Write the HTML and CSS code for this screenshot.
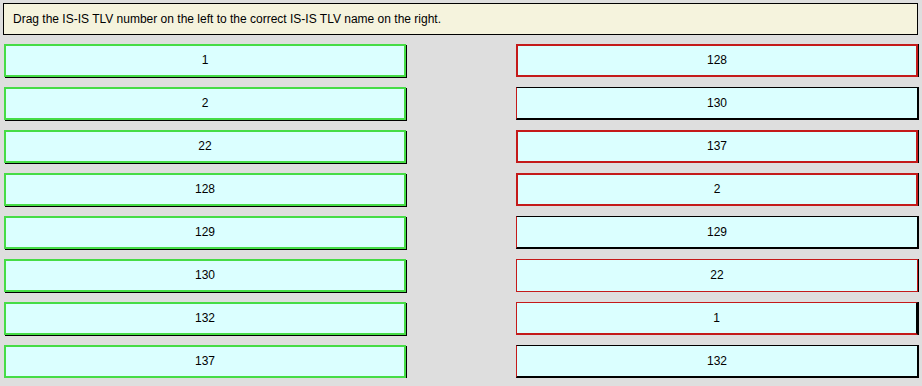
FILE: index.html
```html
<!DOCTYPE html>
<html lang="en">
<head>
    <meta charset="UTF-8">
    <title>IS-IS TLV Drag and Drop</title>
    <link rel="stylesheet" href="styles.css">
</head>
<body>
    <div class="question">Drag the IS-IS TLV number on the left to the correct IS-IS TLV name on the right.</div>

    <div class="board">
        <div class="column">
            <div class="slot slot-left">1</div>
            <div class="slot slot-left">2</div>
            <div class="slot slot-left">22</div>
            <div class="slot slot-left">128</div>
            <div class="slot slot-left">129</div>
            <div class="slot slot-left">130</div>
            <div class="slot slot-left">132</div>
            <div class="slot slot-left">137</div>
        </div>
        <div class="column">
            <div class="slot slot-right">128</div>
            <div class="slot slot-right dark">130</div>
            <div class="slot slot-right">137</div>
            <div class="slot slot-right">2</div>
            <div class="slot slot-right dark">129</div>
            <div class="slot slot-right thin">22</div>
            <div class="slot slot-right under">1</div>
            <div class="slot slot-right dark">132</div>
        </div>
    </div>
</body>
</html>
```

FILE: styles.css
```css
body {
    margin: 0;
    background-color: #dedede;
    font-family: Arial, 'Liberation Sans', sans-serif;
    font-size: 12px;
    color: #000;
}

.question {
    margin: 3px 3px 0 3px;
    width: 904px;
    height: 30px;
    line-height: 30px;
    padding-left: 9px;
    border: 1px solid #000;
    background-color: #f5f3dd;
}

.board {
    display: grid;
    grid-template-columns: 402px 402px;
    column-gap: 110px;
    padding: 9px 0 0 4px;
}

.column {
    display: flex;
    flex-direction: column;
    gap: 10px;
}

.slot {
    box-sizing: border-box;
    height: 33px;
    line-height: 29px;
    text-align: center;
    background-color: #dbffff;
}

.slot-left {
    border: 2px solid #46dc46;
    box-shadow: 1px 1px 0 #000;
}

.slot-right {
    border: 2px solid #c41a1a;
    box-shadow: 1px 0 0 #000;
}

.slot-right.dark {
    border: 1px solid #000;
    border-left-color: #c41a1a;
    border-bottom-width: 2px;
    line-height: 30px;
}

.slot-right.thin {
    border: 1px solid #c41a1a;
    line-height: 31px;
}

.slot-right.under {
    border: 1px solid #c41a1a;
    border-right: 2px solid #000;
    border-bottom: 2px solid #c41a1a;
    line-height: 30px;
}
```
